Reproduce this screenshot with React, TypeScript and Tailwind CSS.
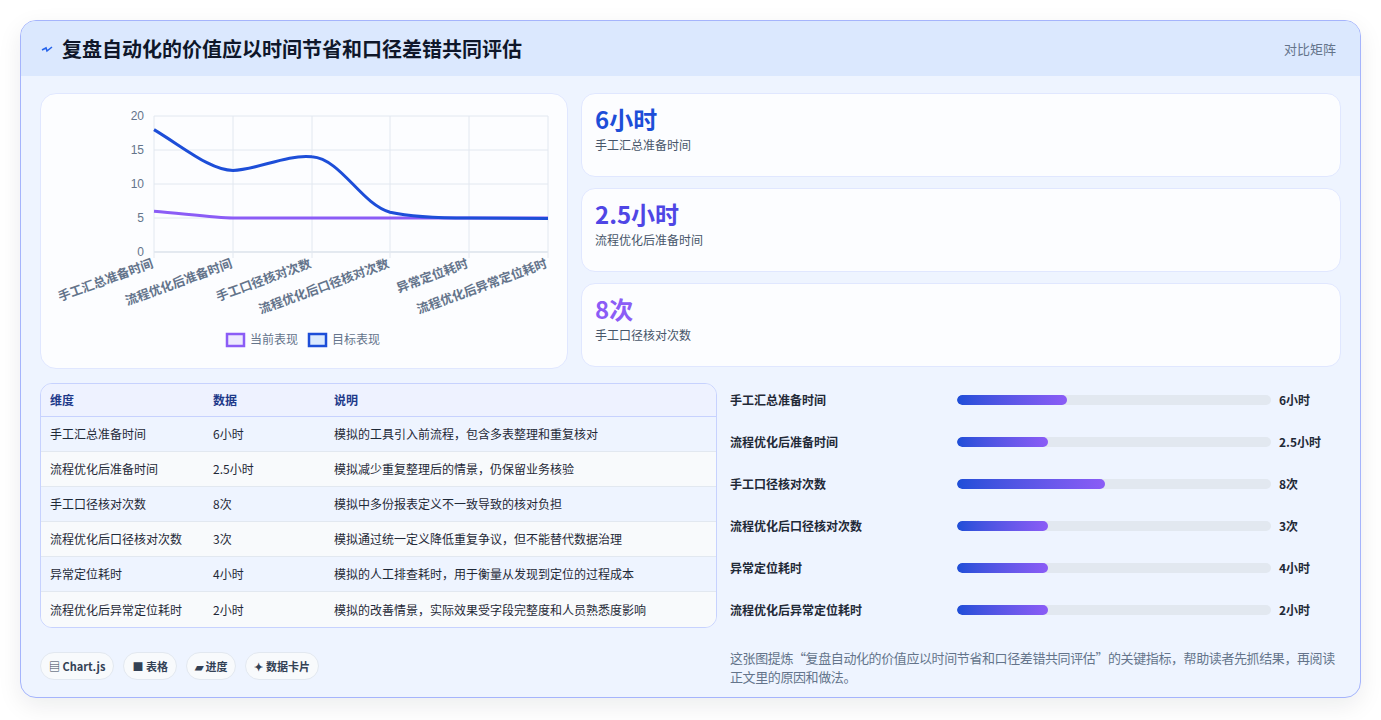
import React from "react";

const rows = [
  ["手工汇总准备时间", "6小时", "模拟的工具引入前流程，包含多表整理和重复核对"],
  ["流程优化后准备时间", "2.5小时", "模拟减少重复整理后的情景，仍保留业务核验"],
  ["手工口径核对次数", "8次", "模拟中多份报表定义不一致导致的核对负担"],
  ["流程优化后口径核对次数", "3次", "模拟通过统一定义降低重复争议，但不能替代数据治理"],
  ["异常定位耗时", "4小时", "模拟的人工排查耗时，用于衡量从发现到定位的过程成本"],
  ["流程优化后异常定位耗时", "2小时", "模拟的改善情景，实际效果受字段完整度和人员熟悉度影响"],
];
const bars = [35, 29, 47, 29, 29, 29];
const xs = [113, 192, 271, 349, 428, 507];
const ys = [0, 5, 10, 15, 20];
const yOf = (v: number) => 158 - v * 6.8;

function Chart() {
  return (
    <svg width="527" height="275" viewBox="0 0 527 275" style={{ fontFamily: "'Liberation Sans','Noto Sans CJK SC',sans-serif" }}>
      {ys.map((v) => (
        <g key={v}>
          <line x1={113} x2={507} y1={yOf(v)} y2={yOf(v)} stroke={v === 0 ? "#cbd5e1" : "#e2e8f0"} />
          <text x={103} y={yOf(v) + 4} textAnchor="end" fontSize="12" fill="#64748b">{v}</text>
        </g>
      ))}
      {xs.map((x) => (
        <line key={x} x1={x} x2={x} y1={22} y2={164} stroke="#e2e8f0" />
      ))}
      {rows.map((r, i) => (
        <text key={i} x={xs[i]} y={173} textAnchor="end" fontSize="12.5" fontWeight="600" fill="#64748b" transform={`rotate(-20 ${xs[i]} 173)`}>{r[0]}</text>
      ))}
      <path d="M113,117.2 C145,120 175,124 192,124 L507,124" fill="none" stroke="#8b5cf6" strokeWidth="3" />
      <path d="M113,35.6 C145,55 170,76.4 192,76.4 C215,76.4 245,60 271,62.8 C300,65 320,110 349,118.2 C370,123 400,124 428,124 L507,124.5" fill="none" stroke="#1d4ed8" strokeWidth="3" />
      <rect x={186} y={240} width={17} height={12} fill="#ede9fe" stroke="#8b5cf6" strokeWidth="2.5" />
      <text x={209} y={250} fontSize="12" fill="#64748b">当前表现</text>
      <rect x={268} y={240} width={17} height={12} fill="#dbeafe" stroke="#1d4ed8" strokeWidth="2.5" />
      <text x={291} y={250} fontSize="12" fill="#64748b">目标表现</text>
    </svg>
  );
}

export default function App() {
  return (
    <div className="w-[1381px] h-[720px] bg-white pt-[20px] px-[20px]" style={{ fontFamily: "'Noto Sans CJK SC','Noto Sans',sans-serif" }}>
      <div className="w-[1341px] h-[678px] rounded-[16px] border border-[#a5b4fc] bg-[#eef4ff] overflow-hidden shadow-[0_8px_24px_rgba(15,23,42,0.08)]">
        <div className="h-[55px] bg-[#dbe8fe] flex items-center justify-between pl-[20px] pr-[24px]">
          <div className="flex items-center gap-[9px]">
            <svg width="12" height="10" viewBox="0 0 12 10"><path d="M1,6 L5,4 L6,7 L11,3" fill="none" stroke="#2563eb" strokeWidth="1.6" /></svg>
            <span className="text-[20px] font-bold text-[#0f172a]">复盘自动化的价值应以时间节省和口径差错共同评估</span>
          </div>
          <span className="text-[13px] text-[#64748b]">对比矩阵</span>
        </div>
        <div className="px-[19px] pt-[17px]">
          <div className="flex gap-[13px]">
            <div className="w-[528px] h-[276px] rounded-[16px] bg-[#fcfdff] border border-[#e0e7ff]">
              <Chart />
            </div>
            <div className="flex-1 flex flex-col gap-[11px]">
              {[["6小时", "手工汇总准备时间", "text-[#1d4ed8]"], ["2.5小时", "流程优化后准备时间", "text-[#4f46e5]"], ["8次", "手工口径核对次数", "text-[#8b5cf6]"]].map(([v, l, c]) => (
                <div key={l} className="h-[84px] rounded-[14px] bg-[#fcfdff] border border-[#e0e7ff] px-[13px] pt-[9px]">
                  <div className={`text-[24px] font-bold leading-[32px] ${c}`}>{v}</div>
                  <div className="text-[12px] text-[#475569] mt-[1px]">{l}</div>
                </div>
              ))}
            </div>
          </div>
          <div className="flex gap-[13px] mt-[14px]">
            <div className="w-[677px] shrink-0">
              <div className="rounded-[12px] border border-[#c7d2fe] overflow-hidden text-[12px]">
                <div className="flex h-[33px] items-center bg-[#eef2ff] border-b border-[#c7d2fe] text-[#1e3a8a] font-semibold px-[9px]">
                  <div className="w-[163px]">维度</div><div className="w-[121px]">数据</div><div>说明</div>
                </div>
                {rows.map((r, i) => (
                  <div key={i} className={`flex h-[35px] items-center px-[9px] text-[#1f2937] ${i < 5 ? "border-b border-[#e2e8f0]" : ""} ${i % 2 === 0 ? "bg-[#eef4ff]" : "bg-[#f8fafc]"}`}>
                    <div className="w-[163px]">{r[0]}</div><div className="w-[121px]">{r[1]}</div><div>{r[2]}</div>
                  </div>
                ))}
              </div>
              <div className="flex gap-[9px] mt-[24px] text-[11px] text-[#334155] font-semibold">
                {["▤ Chart.js", "■ 表格", "▰ 进度", "✦ 数据卡片"].map((t) => (
                  <div key={t} className="h-[28px] px-[8px] flex items-center rounded-full bg-[#f8fafc] border border-[#e2e8f0]">{t}</div>
                ))}
              </div>
            </div>
            <div className="flex-1 -mt-[4px]">
              {rows.map((r, i) => (
                <div key={i} className="flex items-center h-[42px] text-[12px] font-semibold text-[#1f2937]">
                  <div className="w-[227px]">{r[0]}</div>
                  <div className="w-[314px] h-[10px] rounded-full bg-[#e2e8f0] overflow-hidden">
                    <div className="h-full rounded-full bg-gradient-to-r from-[#1d4ed8] to-[#8b5cf6]" style={{ width: `${bars[i]}%` }} />
                  </div>
                  <div className="ml-[8px]">{r[1]}</div>
                </div>
              ))}
              <div className="text-[13px] text-[#64748b] leading-[19px] mt-[17px] tracking-[-0.4px]">这张图提炼“复盘自动化的价值应以时间节省和口径差错共同评估”的关键指标，帮助读者先抓结果，再阅读正文里的原因和做法。</div>
            </div>
          </div>
        </div>
      </div>
    </div>
  );
}
